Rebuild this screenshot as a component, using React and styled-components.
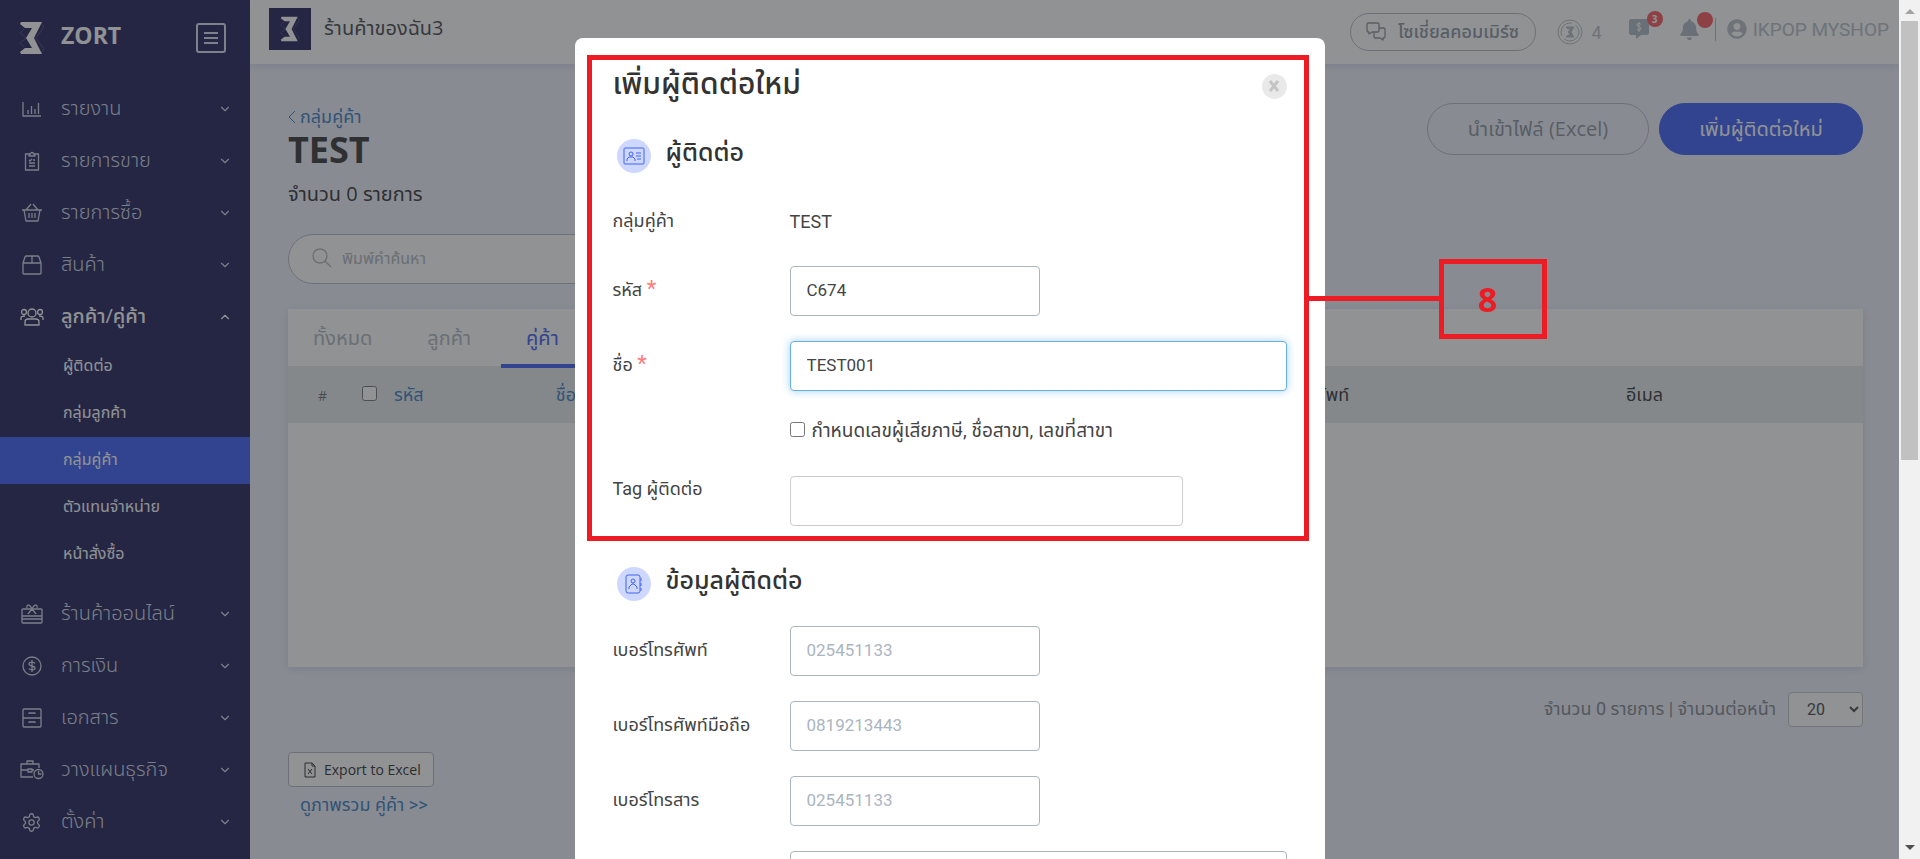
import React, { useState } from "react";
import styled, { createGlobalStyle, css } from "styled-components";
import { LuSettings, LuChevronDown, LuChevronUp } from "react-icons/lu";
import { FaBell, FaUserCircle } from "react-icons/fa";

const BODY_FONT = `"Open Sans", "Noto Sans Thai", "Noto Sans", sans-serif`;
const FORM_FONT = `Roboto, "Noto Sans Thai", "Noto Sans", sans-serif`;

const App = () => {
  const [menu, setMenu] = useState("contact");
  const [form, setForm] = useState({ code: "C674", name: "TEST001" });

  const handleChange = (e) => {
    setForm({ ...form, [e.target.name]: e.target.value });
  };

  return (
    <Page>
      <GlobalStyle />
      <Sidebar>
        <Brand>
          <ZortMark width={26} height={34} />
          <BrandName>ZORT</BrandName>
          <MenuToggle aria-label="menu">
            <MenuBoxIcon />
          </MenuToggle>
        </Brand>
        <Menu>
          {MENU.map((item) => (
            <li key={item.id}>
              <MenuButton
                $active={menu === item.id}
                onClick={() => setMenu(menu === item.id ? "" : item.id)}
              >
                <MenuIcon>{item.icon}</MenuIcon>
                <MenuText>{item.text}</MenuText>
                {menu === item.id && item.children ? <LuChevronUp size={14} /> : <LuChevronDown size={14} />}
              </MenuButton>
              {item.children && menu === item.id && (
                <SubMenu>
                  {item.children.map((child) => (
                    <li key={child}>
                      <SubLink href="#" $active={child === "กลุ่มคู่ค้า"}>{child}</SubLink>
                    </li>
                  ))}
                </SubMenu>
              )}
            </li>
          ))}
        </Menu>
      </Sidebar>

      <Main>
        <Header>
          <ShopLogo><ZortMark width={20} height={28} /></ShopLogo>
          <ShopName>ร้านค้าของฉัน3</ShopName>
          <SocialButton><ChatsIcon />โซเชี่ยลคอมเมิร์ซ</SocialButton>
          <Coin><CoinIcon />4</Coin>
          <Notice aria-label="messages">
            <MoneyChatIcon />
            <Badge>3</Badge>
          </Notice>
          <Notice aria-label="notifications">
            <FaBell size={21} />
            <Badge />
          </Notice>
          <Account href="#"><FaUserCircle size={20} />IKPOP MYSHOP</Account>
        </Header>

        <Content>
          <TitleRow>
            <div>
              <BackLink href="#"><BackIcon />กลุ่มคู่ค้า</BackLink>
              <Title>TEST</Title>
              <Count>จำนวน 0 รายการ</Count>
            </div>
            <Actions>
              <PillButton>นำเข้าไฟล์ (Excel)</PillButton>
              <PillButton $primary>เพิ่มผู้ติดต่อใหม่</PillButton>
            </Actions>
          </TitleRow>

          <SearchBox>
            <SearchIcon />
            <SearchInput aria-label="search" placeholder="พิมพ์คำค้นหา" />
          </SearchBox>

          <Card>
            <Tabs>
              <Tab>ทั้งหมด</Tab>
              <Tab>ลูกค้า</Tab>
              <Tab $active>คู่ค้า</Tab>
            </Tabs>
            <Table>
              <thead>
                <tr>
                  <Th $width="4%" $small>#</Th>
                  <Th $width="13%" $link>
                    <CheckAll type="checkbox" aria-label="select all" />
                    รหัส
                  </Th>
                  <Th $link>ชื่อ</Th>
                  <Th $width="372px">เบอร์โทรศัพท์</Th>
                  <Th $width="237px">อีเมล</Th>
                </tr>
              </thead>
            </Table>
          </Card>

          <Paging>
            <label htmlFor="perPage">จำนวน 0 รายการ | จำนวนต่อหน้า</label>
            <PageSelect id="perPage" defaultValue="20">
              <option>20</option>
              <option>50</option>
              <option>100</option>
            </PageSelect>
          </Paging>
          <ExportButton><ExcelIcon />Export to Excel</ExportButton>
          <Overview href="#">ดูภาพรวม คู่ค้า &gt;&gt;</Overview>
        </Content>
      </Main>

      <Backdrop>
        <Modal role="dialog" aria-labelledby="modalTitle">
          <ModalHead>
            <ModalTitle id="modalTitle">เพิ่มผู้ติดต่อใหม่</ModalTitle>
            <Close aria-label="close"><CloseIcon /></Close>
          </ModalHead>

          <SectionTitle>
            <SectionIcon><IdCardIcon /></SectionIcon>
            <SectionText>ผู้ติดต่อ</SectionText>
          </SectionTitle>
          <FormRow $height={38}>
            <Label as="span">กลุ่มคู่ค้า</Label>
            <Value>TEST</Value>
          </FormRow>
          <FormRow>
            <Label htmlFor="code">รหัส <Required>*</Required></Label>
            <Input id="code" name="code" $width="250px" value={form.code} onChange={handleChange} />
          </FormRow>
          <FormRow>
            <Label htmlFor="name">ชื่อ <Required>*</Required></Label>
            <Input id="name" name="name" $focused value={form.name} onChange={handleChange} />
          </FormRow>
          <FormRow $height={30} $gap={30}>
            <Label as="span" />
            <CheckLabel>
              <Check type="checkbox" />
              กำหนดเลขผู้เสียภาษี, ชื่อสาขา, เลขที่สาขา
            </CheckLabel>
          </FormRow>
          <FormRow $top>
            <Label htmlFor="tag">Tag ผู้ติดต่อ</Label>
            <Input id="tag" $width="393px" $light />
          </FormRow>

          <SectionTitle $second>
            <SectionIcon><AddressBookIcon /></SectionIcon>
            <SectionText>ข้อมูลผู้ติดต่อ</SectionText>
          </SectionTitle>
          {PHONES.map((p) => (
            <FormRow key={p.id}>
              <Label htmlFor={p.id}>{p.text}</Label>
              <Input id={p.id} $width="250px" placeholder={p.placeholder} />
            </FormRow>
          ))}
          <FormRow>
            <Label as="span" />
            <Input aria-label="email" />
          </FormRow>

          <Highlight />
          <Connector />
          <Step>8</Step>
        </Modal>
      </Backdrop>

      <ScrollTrack>
        <Arrow $up />
        <Thumb />
        <Arrow />
      </ScrollTrack>
    </Page>
  );
};

/* icons */

const ZortMark = (props) => (
  <svg viewBox="0 0 26 34" fill="none" {...props}>
    <path d="M22 2l3 4-8 11 8 11-3 4M5 8l-4 4 6 5-6 5 4 4" stroke="#4b4d7d" />
    <path d="M2 1h21l-8 16 8 16H2l-1-2 5-4h7L7 17l6-10H6L1 3z" fill="#fff" />
  </svg>
);

const MenuBoxIcon = () => (
  <svg width="30" height="30" viewBox="0 0 30 30" fill="none" stroke="currentColor" strokeWidth="2">
    <rect x="1" y="1" width="28" height="28" rx="2" />
    <path d="M8 10h14M8 15h14M8 20h14" />
  </svg>
);

const LineIcon = ({ width = 20, children }) => (
  <svg
    width={width}
    height="20"
    viewBox={`0 0 ${width} 20`}
    fill="none"
    stroke="currentColor"
    strokeWidth="1.3"
    strokeLinejoin="round"
  >
    {children}
  </svg>
);

const ChartIcon = () => (
  <LineIcon>
    <path d="M1 3v14h18M6 15v-4M9.500 15V7M13 15v-5M16.500 15V4" />
  </LineIcon>
);

const ClipboardIcon = () => (
  <LineIcon>
    <path d="M7 3H3.500v16h13V3H13M7 5V3h1.500a1.500 1.500 0 0 1 3 0H13v2zM7 9l1 1 2-2M11 9h2M7 12h6M7 15h6" />
  </LineIcon>
);

const BasketIcon = () => (
  <LineIcon width={22}>
    <path d="M1 7h20M3 7l2 11h12l2-11M5 7l5-6M17 7l-5-6M8 10v5M11 10v5M14 10v5" />
  </LineIcon>
);

const BoxIcon = () => (
  <LineIcon>
    <path d="M1 8l2-6q.5-1 1.500-1h11q1 0 1.500 1l2 6v10q0 1-1 1H2q-1 0-1-1zM1 8h18M10 1v7" />
  </LineIcon>
);

const PeopleIcon = () => (
  <LineIcon width={24}>
    <circle cx="12" cy="6" r="4" />
    <circle cx="4" cy="5" r="2.500" />
    <circle cx="20" cy="5" r="2.500" />
    <path d="M5 18v-3c0-2 1-3 3-3h8c2 0 3 1 3 3v3zM1 13v-2c0-1 1-2 4-2M23 13v-2c0-1-1-2-4-2" />
  </LineIcon>
);

const GiftCardIcon = () => (
  <LineIcon width={22}>
    <rect x="1" y="5" width="20" height="14" rx="1" />
    <path d="M1 12h20M1 15h20M7 10l4-5 4 5M11 5C9 0 5 0 6 4M11 5c2-5 6-5 5-1" />
  </LineIcon>
);

const MoneyIcon = () => (
  <LineIcon>
    <circle cx="10" cy="10" r="9" />
    <path d="M13 7.500c-1-2-6-2-6 .5s6 1.500 6 4-5 2.500-6 .5M10 4v12" />
  </LineIcon>
);

const CabinetIcon = () => (
  <LineIcon>
    <rect x="1" y="1" width="18" height="18" rx="1" />
    <path d="M1 10h18M7 6V5h6v1M7 15v-1h6v1" />
  </LineIcon>
);

const BriefcaseIcon = () => (
  <LineIcon width={24}>
    <path d="M13 17H1V4h18v4M7 4V1h6v3M1 10h7M12 10h2M8 9h4v3H8z" />
    <circle cx="18.500" cy="14" r="4.500" />
    <path d="M18.500 11v3h3" />
  </LineIcon>
);

const ChatsIcon = () => (
  <LineIcon>
    <path d="M2 1h10l1 1v7l-1 1H6l-3 2v-2H2L1 9V2zM13 6h5l1 1v8l-1 1h-1v2l-3-2H9l-1-1v-5" />
  </LineIcon>
);

const SearchIcon = () => (
  <LineIcon>
    <circle cx="8" cy="8" r="7" />
    <path d="M13 13l6 6" />
  </LineIcon>
);

const CoinIcon = () => (
  <svg width="26" height="26" viewBox="0 0 26 26" fill="none" stroke="currentColor">
    <circle cx="13" cy="13" r="12" />
    <circle cx="13" cy="13" r="9" strokeDasharray="20 4" />
    <path d="M9 8h8l-3 5 3 5H9l2-2h3l-3-3 3-3h-3z" fill="currentColor" />
  </svg>
);

const MoneyChatIcon = () => (
  <svg width="22" height="22" viewBox="0 0 22 22" fill="currentColor">
    <path d="M3 1h16a2 2 0 0 1 2 2v12a2 2 0 0 1-2 2h-6l-5 4v-4H3a2 2 0 0 1-2-2V3a2 2 0 0 1 2-2z" />
    <path d="M13 6.500c-1-1.500-4-1.500-4 .5s4 1.500 4 3.500-3 2-4 .5M11 4v10" stroke="#fff" fill="none" />
  </svg>
);

const BackIcon = () => (
  <svg width="8" height="14" viewBox="0 0 8 14" fill="none" stroke="currentColor">
    <path d="M7 1L1 7l6 6" />
  </svg>
);

const ExcelIcon = () => (
  <svg width="12" height="16" viewBox="0 0 12 16" fill="none" stroke="currentColor">
    <path d="M1 1h7l3 3v11H1zM8 1v3h3M4 7l4 5M8 7l-4 5" />
  </svg>
);

const CloseIcon = () => (
  <svg width="12" height="12" viewBox="0 0 12 12" stroke="#c4c4c4" strokeWidth="3">
    <path d="M2 1l8 10M10 1L2 11" />
  </svg>
);

const IdCardIcon = () => (
  <svg width="22" height="18" viewBox="0 0 22 18" fill="none" stroke="#4363f5">
    <rect x="1" y="1" width="20" height="16" rx="1" />
    <circle cx="8" cy="7" r="2" />
    <path d="M4 14v-2l2-2h4l2 2v2M13 6h5M13 9h5M14 12h4" />
  </svg>
);

const AddressBookIcon = () => (
  <svg width="18" height="20" viewBox="0 0 18 20" fill="none" stroke="#4363f5">
    <rect x="1" y="1" width="14" height="18" rx="2" />
    <circle cx="8" cy="7" r="2" />
    <path d="M4 15v-2l3-3h2l3 3v2M16 4v3M16 9v3M16 14v3" />
  </svg>
);

/* data */

const MENU = [
  { id: "report", text: "รายงาน", icon: <ChartIcon /> },
  { id: "sell", text: "รายการขาย", icon: <ClipboardIcon /> },
  { id: "buy", text: "รายการซื้อ", icon: <BasketIcon /> },
  { id: "product", text: "สินค้า", icon: <BoxIcon /> },
  {
    id: "contact",
    text: "ลูกค้า/คู่ค้า",
    icon: <PeopleIcon />,
    children: ["ผู้ติดต่อ", "กลุ่มลูกค้า", "กลุ่มคู่ค้า", "ตัวแทนจำหน่าย", "หน้าสั่งซื้อ"],
  },
  { id: "online", text: "ร้านค้าออนไลน์", icon: <GiftCardIcon /> },
  { id: "finance", text: "การเงิน", icon: <MoneyIcon /> },
  { id: "document", text: "เอกสาร", icon: <CabinetIcon /> },
  { id: "plan", text: "วางแผนธุรกิจ", icon: <BriefcaseIcon /> },
  { id: "setting", text: "ตั้งค่า", icon: <LuSettings size={21} strokeWidth={1.5} /> },
];

const PHONES = [
  { id: "phone", text: "เบอร์โทรศัพท์", placeholder: "025451133" },
  { id: "mobile", text: "เบอร์โทรศัพท์มือถือ", placeholder: "0819213443" },
  { id: "fax", text: "เบอร์โทรสาร", placeholder: "025451133" },
];

/* styles */

const GlobalStyle = createGlobalStyle`
  * {
    box-sizing: border-box;
  }
  body {
    margin: 0;
    font-family: ${BODY_FONT};
    font-size: 18px;
    color: #3b3b3b;
  }
  button, input, select {
    font-family: inherit;
  }
  button {
    cursor: pointer;
  }
  a {
    text-decoration: none;
  }
`;

const Page = styled.div`
  display: flex;
  height: 100vh;
  padding-right: 21px;
  overflow: hidden;
  background-color: #eff1fb;
`;

const Sidebar = styled.nav`
  flex: 0 0 250px;
  background-color: #27275f;
  color: #d3d8e4;
`;

const Brand = styled.div`
  display: flex;
  align-items: center;
  height: 83px;
  padding: 0 24px 8px 19px;
`;

const BrandName = styled.span`
  flex: 1;
  margin-left: 16px;
  padding-bottom: 6px;
  font-size: 23px;
  font-weight: 700;
  color: #fff;
`;

const MenuToggle = styled.button`
  display: flex;
  padding: 0;
  border: none;
  background: none;
  color: #d9deea;
`;

const Menu = styled.ul`
  margin: 0;
  padding: 0;
  list-style: none;
`;

const MenuButton = styled.button`
  display: flex;
  align-items: center;
  width: 100%;
  height: 52px;
  padding: 0 18px 0 16px;
  border: none;
  background: none;
  font-size: 20px;
  font-weight: ${(props) => (props.$active ? 500 : 300)};
  color: ${(props) => (props.$active ? "#fff" : "#d3d8e4")};
  text-align: left;
`;

const MenuIcon = styled.span`
  display: flex;
  justify-content: center;
  width: 31px;
  margin-right: 14px;
`;

const MenuText = styled.span`
  flex: 1;
`;

const SubMenu = styled.ul`
  margin: 0;
  padding: 0 0 10px;
  list-style: none;
`;

const SubLink = styled.a`
  display: flex;
  align-items: center;
  height: 47px;
  padding: 0 0 2px 63px;
  font-size: 16px;
  color: #fff;
  background-color: ${(props) => (props.$active ? "#4363f5" : "transparent")};
`;

const Main = styled.main`
  flex: 1;
  min-width: 0;
`;

const Header = styled.header`
  display: flex;
  align-items: center;
  height: 64px;
  padding: 0 10px 6px 19px;
  background-color: #fff;
  box-shadow: 0 2px 8px rgba(60, 70, 140, 0.15);
  color: #b9c1c9;
`;

const ShopLogo = styled.div`
  display: flex;
  align-items: center;
  justify-content: center;
  width: 42px;
  height: 42px;
  background-color: #27275f;
`;

const ShopName = styled.span`
  flex: 1;
  margin-left: 13px;
  font-size: 20px;
  color: #4c4c50;
`;

const SocialButton = styled.button`
  display: flex;
  align-items: center;
  justify-content: center;
  gap: 12px;
  width: 186px;
  height: 38px;
  margin-top: 6px;
  padding: 0;
  border: 1px solid #b9bcc4;
  border-radius: 19px;
  background: none;
  font-size: 18px;
  font-weight: 500;
  color: #8f979f;
`;

const Coin = styled.span`
  display: flex;
  align-items: center;
  gap: 9px;
  margin: 6px 26px 0 21px;
  font-family: ${FORM_FONT};
`;

const Notice = styled.button`
  position: relative;
  display: flex;
  margin-right: 29px;
  padding: 0;
  border: none;
  background: none;
  color: #b3bbc4;
`;

const Badge = styled.span`
  position: absolute;
  top: -7px;
  right: -13px;
  width: 16px;
  height: 16px;
  border-radius: 50%;
  background-color: #f85a60;
  color: #fff;
  font-size: 10px;
  font-weight: 700;
  line-height: 16px;
  text-align: center;
`;

const Account = styled.a`
  display: flex;
  align-items: center;
  gap: 6px;
  margin-left: -14px;
  padding-left: 11px;
  border-left: 1px solid #b9bcc4;
  font-family: ${FORM_FONT};
  font-size: 19px;
  color: #b9c1c9;
`;

const Content = styled.section`
  padding: 39px 36px 0 38px;
`;

const TitleRow = styled.div`
  display: flex;
  justify-content: space-between;
  height: 131px;
`;

const BackLink = styled.a`
  display: flex;
  align-items: center;
  gap: 4px;
  height: 28px;
  color: #3f82c4;
`;

const Title = styled.h1`
  margin: 0;
  font-size: 36px;
  line-height: 38px;
`;

const Count = styled.p`
  margin: 11px 0 0;
  font-size: 20px;
  line-height: 28px;
`;

const Actions = styled.div`
  display: flex;
  gap: 10px;
`;

const PillButton = styled.button`
  width: 222px;
  height: 52px;
  padding: 2px 0 0;
  border: 1px solid #b9bcc4;
  border-radius: 26px;
  background: none;
  font-size: 20px;
  color: #8f979f;
  ${(props) =>
    props.$primary &&
    css`
      width: 204px;
      border-color: #4363f5;
      background-color: #4363f5;
      color: #fff;
    `}
`;

const SearchBox = styled.div`
  display: flex;
  align-items: center;
  gap: 8px;
  width: 50%;
  height: 50px;
  padding: 0 23px 2px;
  border: 1px solid #b9bcc4;
  border-radius: 25px;
  background-color: #fff;
  color: #b3b8be;
`;

const SearchInput = styled.input`
  flex: 1;
  border: none;
  outline: none;
  font-size: 16px;
  &::placeholder {
    color: #b3b8be;
  }
`;

const Card = styled.div`
  height: 358px;
  margin-top: 25px;
  background-color: #fff;
  box-shadow: 0 2px 8px rgba(60, 70, 140, 0.15);
`;

const Tabs = styled.div`
  display: flex;
  gap: 5px;
  height: 57px;
`;

const Tab = styled.button`
  height: 59px;
  padding: 4px 25px 0;
  border: none;
  border-bottom: 4px solid ${(props) => (props.$active ? "#4363f5" : "transparent")};
  background: none;
  font-size: 20px;
  color: ${(props) => (props.$active ? "#4363f5" : "#b3b8c0")};
`;

const Table = styled.table`
  width: 100%;
  border-collapse: collapse;
  table-layout: fixed;
  background-color: #e9ebed;
`;

const Th = styled.th`
  width: ${(props) => props.$width || "auto"};
  height: 57px;
  padding: 2px 0 0;
  font-size: ${(props) => (props.$small ? 14 : 18)}px;
  font-weight: 400;
  color: ${(props) => (props.$link ? "#3f82c4" : "#3b3b3b")};
  text-align: left;
  &:first-child {
    padding-left: 30px;
    color: #70757b;
  }
`;

const CheckAll = styled.input`
  width: 15px;
  height: 15px;
  margin: 0 17px 0 11px;
`;

const Paging = styled.div`
  display: flex;
  align-items: center;
  justify-content: flex-end;
  gap: 12px;
  margin-top: 25px;
  font-family: ${FORM_FONT};
  color: #858a92;
`;

const PageSelect = styled.select`
  width: 75px;
  height: 35px;
  padding-left: 14px;
  border: 1px solid #c5c8cc;
  border-radius: 4px;
  background-color: #fff;
  font-size: 16px;
  color: #4c4c50;
`;

const ExportButton = styled.button`
  display: flex;
  align-items: center;
  gap: 8px;
  height: 35px;
  margin-top: 25px;
  padding: 0 12px 0 15px;
  border: 1px solid #b9bcc4;
  border-radius: 4px;
  background-color: #fff;
  font-size: 14px;
  color: #333;
`;

const Overview = styled.a`
  display: inline-block;
  margin: 5px 0 0 12px;
  font-family: ${FORM_FONT};
  color: #3f82c4;
`;

const Backdrop = styled.div`
  position: fixed;
  inset: 0 21px 0 0;
  display: flex;
  justify-content: center;
  align-items: flex-start;
  padding-top: 38px;
  overflow: hidden;
  background-color: rgba(33, 37, 41, 0.5);
`;

const Modal = styled.div`
  position: relative;
  flex: 0 1 750px;
  padding: 24px 38px;
  border-radius: 8px;
  background-color: #fff;
  font-family: ${FORM_FONT};
  color: #444;
`;

const ModalHead = styled.div`
  display: flex;
  align-items: center;
  justify-content: space-between;
  height: 48px;
`;

const ModalTitle = styled.h2`
  margin: 0;
  padding-bottom: 4px;
  font-size: 30px;
  font-weight: 500;
  line-height: 44px;
  color: #333;
`;

const Close = styled.button`
  display: flex;
  align-items: center;
  justify-content: center;
  width: 25px;
  height: 25px;
  padding: 0;
  border: none;
  border-radius: 50%;
  background-color: #e9e9e9;
`;

const SectionTitle = styled.h3`
  display: flex;
  align-items: center;
  gap: 15px;
  height: 34px;
  margin: ${(props) => (props.$second ? "41px 0 25px" : "29px 0 30px")};
  padding-left: 4px;
`;

const SectionText = styled.span`
  padding-bottom: 6px;
  font-size: 25px;
  font-weight: 500;
  color: #333;
`;

const SectionIcon = styled.span`
  display: flex;
  align-items: center;
  justify-content: center;
  width: 34px;
  height: 34px;
  border-radius: 50%;
  background-color: #ced8ff;
`;

const FormRow = styled.div`
  display: flex;
  align-items: ${(props) => (props.$top ? "flex-start" : "center")};
  height: ${(props) => props.$height || 50}px;
  margin-bottom: ${(props) => props.$gap || 25}px;
`;

const Label = styled.label`
  flex: 0 0 177px;
  padding-bottom: 2px;
`;

const Required = styled.span`
  font-size: 22px;
  line-height: 18px;
  color: #ff7b7b;
`;

const Value = styled.span`
  padding-bottom: 2px;
`;

const Input = styled.input`
  width: ${(props) => props.$width || "100%"};
  height: 50px;
  padding: 0 16px 2px;
  border: 1px solid ${(props) => (props.$light ? "#ccc" : "#abb5bf")};
  border-radius: 4px;
  outline: none;
  font-size: 17px;
  color: #444;
  ${(props) =>
    props.$focused &&
    css`
      border-color: #66afe9;
      box-shadow: 0 0 8px rgba(102, 175, 233, 0.6);
    `}
  &::placeholder {
    color: #abb5bf;
  }
`;

const CheckLabel = styled.label`
  display: flex;
  align-items: center;
  gap: 7px;
  font-size: 19px;
`;

const Check = styled.input`
  width: 15px;
  height: 15px;
  margin: 0 0 4px;
`;

const Highlight = styled.div`
  position: absolute;
  top: 17px;
  left: 12px;
  right: 16px;
  height: 486px;
  border: 5px solid #ed1c24;
  pointer-events: none;
`;

const Connector = styled.div`
  position: absolute;
  top: 258px;
  left: calc(100% - 16px);
  width: 130px;
  height: 5px;
  background-color: #ed1c24;
`;

const Step = styled.div`
  position: absolute;
  top: 221px;
  left: calc(100% + 114px);
  width: 108px;
  height: 80px;
  padding-right: 10px;
  border: 5px solid #ed1c24;
  font-family: ${BODY_FONT};
  font-size: 34px;
  font-weight: 700;
  line-height: 70px;
  text-align: center;
  color: #ed1c24;
`;

const ScrollTrack = styled.div`
  position: fixed;
  top: 0;
  right: 0;
  bottom: 0;
  display: flex;
  flex-direction: column;
  align-items: center;
  width: 21px;
  padding: 9px 0;
  background-color: #f1f1f1;
`;

const Arrow = styled.span`
  border: 5px solid transparent;
  border-top-width: ${(props) => (props.$up ? 0 : 5)}px;
  border-bottom-width: ${(props) => (props.$up ? 5 : 0)}px;
  border-top-color: ${(props) => (props.$up ? "transparent" : "#505050")};
  border-bottom-color: ${(props) => (props.$up ? "#a3a3a3" : "transparent")};
`;

const Thumb = styled.span`
  width: 17px;
  height: 439px;
  margin: 7px 0 auto;
  background-color: #c1c1c1;
`;

export default App;
